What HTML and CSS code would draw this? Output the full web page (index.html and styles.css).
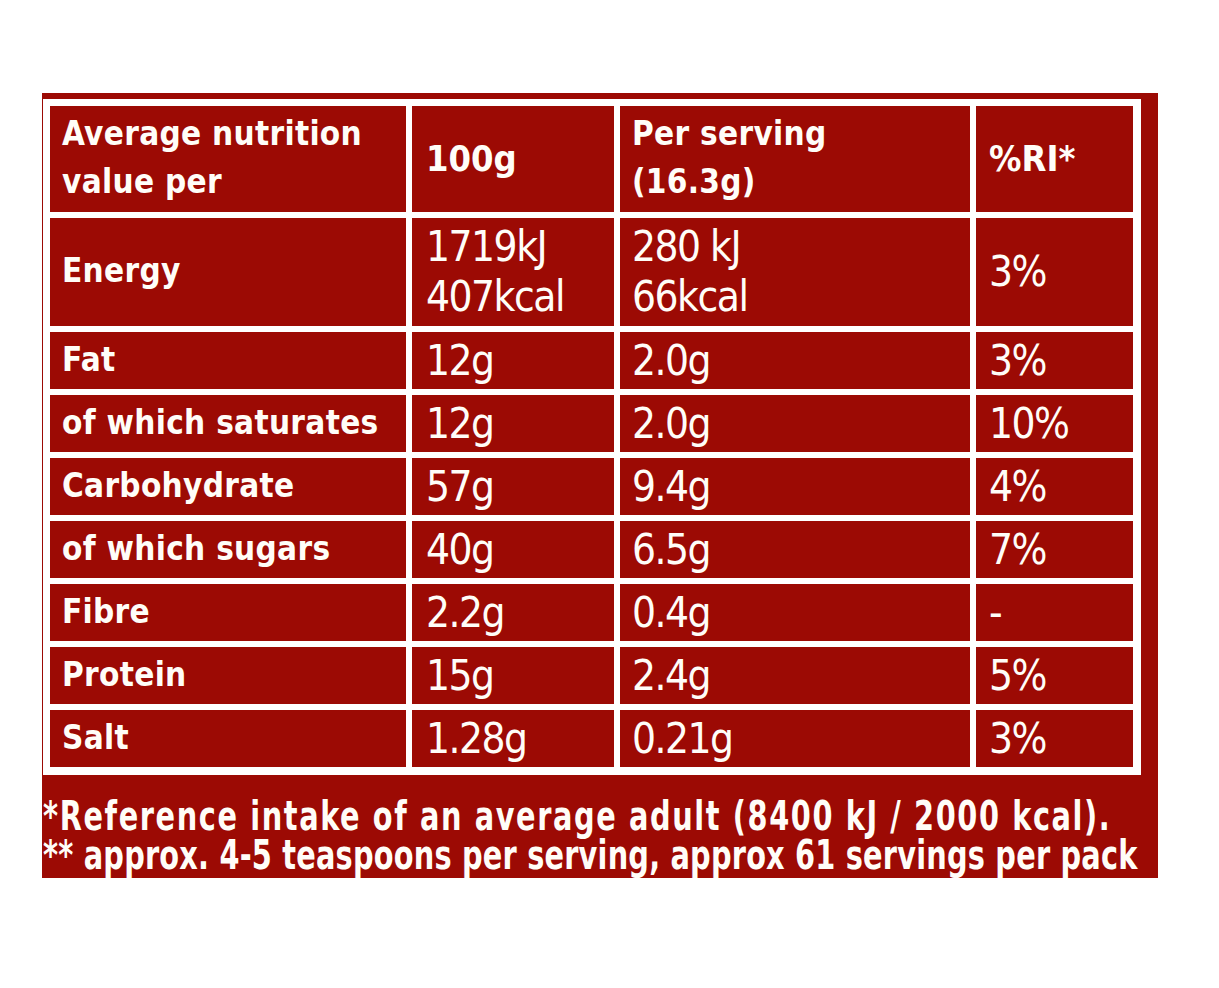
FILE: index.html
```html
<!DOCTYPE html>
<html lang="en">
<head>
<meta charset="utf-8">
<title>Nutrition information</title>
<link rel="stylesheet" href="styles.css">
</head>
<body>
<div class="panel">
  <div class="table">
    <div class="cell label head two">Average nutrition<br>value per</div>
    <div class="cell value headnum c2">100g</div>
    <div class="cell label head two c3">Per serving<br>(16.3g)</div>
    <div class="cell value headnum c4">%RI*</div>

    <div class="cell label">Energy</div>
    <div class="cell value two c2">1719kJ<br>407kcal</div>
    <div class="cell value two c3">280 kJ<br>66kcal</div>
    <div class="cell value c4">3%</div>

    <div class="cell label">Fat</div>
    <div class="cell value c2">12g</div>
    <div class="cell value c3">2.0g</div>
    <div class="cell value c4">3%</div>

    <div class="cell label">of which saturates</div>
    <div class="cell value c2">12g</div>
    <div class="cell value c3">2.0g</div>
    <div class="cell value c4">10%</div>

    <div class="cell label">Carbohydrate</div>
    <div class="cell value c2">57g</div>
    <div class="cell value c3">9.4g</div>
    <div class="cell value c4">4%</div>

    <div class="cell label">of which sugars</div>
    <div class="cell value c2">40g</div>
    <div class="cell value c3">6.5g</div>
    <div class="cell value c4">7%</div>

    <div class="cell label">Fibre</div>
    <div class="cell value c2">2.2g</div>
    <div class="cell value c3">0.4g</div>
    <div class="cell value c4">-</div>

    <div class="cell label">Protein</div>
    <div class="cell value c2">15g</div>
    <div class="cell value c3">2.4g</div>
    <div class="cell value c4">5%</div>

    <div class="cell label">Salt</div>
    <div class="cell value c2">1.28g</div>
    <div class="cell value c3">0.21g</div>
    <div class="cell value c4">3%</div>
  </div>
  <div class="notes">
    <p class="note-ri">*Reference intake of an average adult (8400 kJ / 2000 kcal).</p>
    <p class="note-serving">** approx. 4-5 teaspoons per serving, approx 61 servings per pack</p>
  </div>
</div>
</body>
</html>
```
FILE: styles.css
```css
html, body {
  margin: 0;
  padding: 0;
  background: #ffffff;
}

body {
  font-family: "DejaVu Sans Condensed", "DejaVu Sans", sans-serif;
  font-stretch: condensed;
}

.panel {
  width: 1116px;
  height: 785px;
  margin: 93px 0 0 42px;
  padding-top: 6px;
  box-sizing: border-box;
  background: #9c0a04;
  overflow: hidden;
}

.table {
  width: 1098px;
  box-sizing: border-box;
  margin-left: 1px;
  padding: 7px 7px 8px 7px;
  background: #ffffff;
  display: grid;
  grid-template-columns: 356px 202px 350px 157px;
  grid-template-rows: 106px 108px repeat(7, 57px);
  gap: 6px;
}

.cell {
  background: #9c0a04;
  color: #fffdf8;
  display: flex;
  align-items: center;
  padding-left: 12px;
  box-sizing: border-box;
  white-space: nowrap;
}

.c2 { padding-left: 14px; }
.c3 { padding-left: 12px; }
.c4 { padding-left: 13px; }

.label {
  font-weight: bold;
  font-size: 33px;
  line-height: 1;
  padding-bottom: 3px;
  letter-spacing: 0.3px;
}

.label.head {
  line-height: 48px;
}

.value {
  font-weight: normal;
  font-size: 42px;
  line-height: 1;
  letter-spacing: -1.5px;
}

.value.two {
  line-height: 50px;
}

.headnum {
  font-weight: bold;
  font-size: 36px;
  letter-spacing: 0;
}

.notes {
  margin: 22px 0 0 1px;
  color: #fffdf8;
  font-weight: bold;
  font-size: 40px;
  line-height: 39px;
  white-space: nowrap;
  transform: scaleX(0.8);
  transform-origin: left top;
}

.notes p {
  margin: 0;
}

.note-ri {
  letter-spacing: 2px;
}

.note-serving {
  letter-spacing: 0.25px;
}
```
